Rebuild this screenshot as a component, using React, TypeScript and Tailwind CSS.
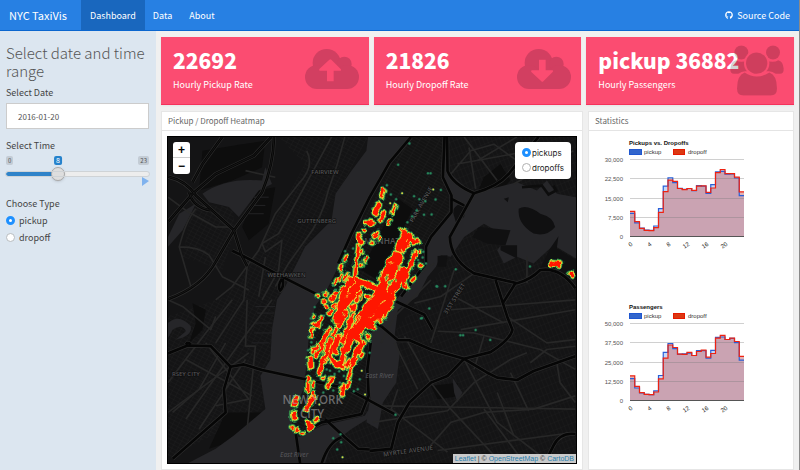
import React, { useState } from "react";
import { FaGithub } from "react-icons/fa";

const sourceFont = "font-['Noto_Sans_CJK_JP','Open_Sans',sans-serif]";

/* ---------- value boxes ---------- */

function CloudIcon({ down = false }: { down?: boolean }) {
  return (
    <svg viewBox="0 0 162 120" className="h-10 w-[54px]" aria-hidden="true">
      <g fill="#d23f61">
        <circle cx="65" cy="42" r="42" />
        <circle cx="118" cy="45" r="22" />
        <circle cx="36" cy="84" r="36" />
        <circle cx="126" cy="84" r="36" />
        <path d="M36 60H126V120H36Z" />
      </g>
      <path
        fill="#fb4c71"
        d={
          down
            ? "M66 32H86V64H107Q110 66 107 69L79 97Q76 100 73 97L43 69Q41 66 44 64H66Z"
            : "M66 97H86V65H107Q110 63 107 60L79 32Q76 29 73 32L43 60Q41 63 44 65H66Z"
        }
      />
    </svg>
  );
}

function PeopleIcon() {
  return (
    <svg viewBox="0 0 162 152" className="h-[51px] w-[54px]" aria-hidden="true">
      <mask id="people-gap">
        <rect width="162" height="152" fill="#fff" />
        <circle cx="80" cy="54" r="38" fill="#000" />
        <rect x="16" y="78" width="130" height="80" rx="30" fill="#000" />
      </mask>
      <mask id="body-gap">
        <rect width="162" height="152" fill="#fff" />
        <circle cx="80" cy="54" r="38" fill="#000" />
      </mask>
      <g fill="#000" opacity="0.17">
        <g mask="url(#people-gap)">
          <circle cx="34" cy="22" r="21" />
          <circle cx="129" cy="22" r="21" />
          <path d="M18 45Q34 54 52 45L60 86H12Q0 86 1 70Q3 48 18 45Z" />
          <path d="M145 45Q128 54 110 45L102 86H150Q162 86 161 70Q159 48 145 45Z" />
        </g>
        <circle cx="80" cy="54" r="32" />
        <path mask="url(#body-gap)" d="M44 82Q80 106 118 82Q141 90 141 130Q141 151 122 151H40Q21 151 21 130Q21 90 44 82Z" />
      </g>
    </svg>
  );
}

function ValueBox({ value, caption, icon, iconClass }: { value: string; caption: string; icon: React.ReactNode; iconClass: string }) {
  return (
    <section className="relative h-[68px] border-b border-[#f5315b] bg-[#fb4c71] pt-[7px] pl-3 text-white shadow-xs">
      <p className="text-[21px] leading-8 font-black">{value}</p>
      <p className="mt-px text-[9px] leading-4">{caption}</p>
      <div className={`absolute right-[10px] ${iconClass}`}>{icon}</div>
    </section>
  );
}

/* ---------- map ---------- */

const majorRoads = [
  "M6 275L80 190L150 130L265 75L318 18",
  "M80 155L110 100L170 18",
  "M6 138Q60 150 90 195L205 300L228 375L245 408",
  "M70 185Q80 230 135 240",
  "M326 18Q325 100 290 185L205 300L150 395Q110 470 6 508",
  "M200 362L228 375L350 440L465 498L510 520",
  "M350 446Q335 470 345 482Q358 470 352 446",
  "M6 672L65 648L135 650L195 712L175 780L180 850L100 920L20 990",
  "M60 645Q65 635 75 645",
  "M195 712L235 705L290 722L420 750L520 772",
  "M740 18L675 95L615 200L560 310L520 400",
  "M841 18L836 140L862 195L862 245L800 320L785 350L785 400L710 500",
  "M849 18L850 120Q865 160 930 188L857 320Q860 390 930 430L1060 460Q1100 450 1130 420Q1190 410 1236 475",
  "M862 205L900 225",
  "M930 188Q1000 170 1035 130L1090 60L1125 18",
  "M995 450L1030 560L1046 600Q1040 630 980 668L900 688L800 660L735 632L700 632L650 590",
  "M1055 460L1017 520",
  "M900 688L850 740L800 760L735 820L700 880L680 960L615 966",
  "M900 688L970 730L1000 745L1060 752L1110 725L1236 680",
  "M695 515L780 555L805 600",
  "M650 590L620 575",
  "M560 785L690 855",
  "M480 870L540 925L580 960L615 962",
  "M390 900L405 1004",
  "M1150 990L1170 950Q1190 910 1236 915",
  "M470 1004Q490 940 530 925",
  "M435 900L470 880L590 855L612 800L608 720L618 640",
];

const minorRoads = [
  "M425 60Q450 110 400 160L330 250L280 360L200 470L150 510",
  "M540 18Q520 100 490 180Q470 270 420 330L370 400L330 470",
  "M500 18L450 110L340 310L290 340L300 365L350 330L340 420L290 510",
  "M90 235Q60 270 40 350L60 420L75 470M40 350Q100 350 130 375L170 440L250 480",
  "M245 408L235 510L150 640M300 380L280 500",
  "M240 120L330 140M6 200L60 240L150 290L200 290",
  "M6 760L120 610L200 510M60 870L230 630L320 510M100 900L240 690",
  "M120 640L250 810L150 830M6 850L250 670M60 690L260 800",
  "M245 510L240 650L270 650L245 900",
  "M6 510L50 530L135 600L150 560M20 850L100 780L180 640",
  "M860 130L920 60L990 40L1060 90M880 100L1100 60M900 18L1000 150",
  "M915 50L935 175M940 90L1060 18M1050 160L1230 60",
  "M620 630L640 560L700 480L810 400M650 640L690 560L800 450",
  "M930 430L830 500L750 520M870 420L800 640M1090 380L1090 460",
  "M1030 560L1150 640L1236 630M820 605L930 610L1130 660L1236 720",
  "M720 620L800 760L860 840L1000 990M690 640L760 780",
  "M640 830L1236 840M625 880L850 845L930 760L1040 690L1090 670",
  "M790 960L860 880L960 850L1110 840L1236 800M820 965L1236 910",
  "M900 690L1000 880L1130 980M1040 730L1095 845M890 600L1236 540",
  "M1180 700L1190 760L1236 820M1100 700L1150 660L1236 650",
  "M960 620L930 720M960 840L1080 1000M1000 790L1050 920",
  "M860 540L1236 510M870 500L1020 580M700 780L680 840L850 970",
];

type Heat = [number, string];

const heatStrokes: Heat[] = [
  [8, "M312 30L306 50"], [15, "M296 74L287 96"], [9, "M313 98L304 118"], [13, "M262 126L276 129"],
  [4, "M348 75L338 97M334 118L328 130"], [7, "M296 158L284 170M301 172L298 176M252 150V151M278 188V189"],
  [13, "M236 168L244 186"], [8, "M236 200L229 252L226 290L212 318"], [6, "M262 230L256 242M245 255V256M244 214V215"],
  [7, "M187 256L182 272M200 230L195 240"], [5, "M170 300L164 312M186 286L178 300M204 282L196 296"],
  [12, "M371 152L402 184"], [32, "M382 170L366 200"], [36, "M352 234L324 284"], [30, "M318 290L306 334"],
  [11, "M413 184L405 190M408 220L392 258L372 304L378 322"], [7, "M424 255L422 257M422 212V213M404 296L398 302"],
  [24, "M370 275L346 318L322 370"], [24, "M236 312L214 346L184 386L172 420"], [13, "M232 302L260 312L306 334"],
  [16, "M212 300L194 336L178 380"], [36, "M306 344L268 388L246 426L224 468"], [28, "M326 370L298 400L262 432"],
  [11, "M264 350H268M224 378L214 384M242 340L230 362"], [12, "M198 398L180 436M218 404L204 450L186 486"],
  [9, "M236 460L240 496L226 528L214 560M250 488L238 520"], [18, "M214 460L202 500"], [16, "M196 500L186 550L172 556"],
  [10, "M166 480L150 528L156 546L188 562M178 470L164 520"], [10, "M138 458L124 510L108 528M116 582L132 540L150 484"],
  [8, "M150 448L136 474M170 446L158 468M262 466L266 476M272 440L284 448M210 540L200 560"],
  [11, "M102 436L116 430"], [7, "M96 452L94 470M102 408L100 412M124 416L118 440M112 498L98 516"], [14, "M91 538L92 560"],
  [8, "M128 596H130M156 598L142 622M190 622L186 646M214 570L206 600M206 612L202 624"],
  [8, "M84 610V638M102 640V646M86 598V600M100 610V618"], [14, "M50 656L42 676"], [12, "M98 658L78 692"],
  [14, "M42 704L44 718"], [8, "M37 745V746M50 752H51M64 763H65M106 724L112 718"], [14, "M84 732L88 748L94 742"],
  [9, "M113 349V350M152 356V358M141 378V380M150 398V399M136 343V344M134 366V367M168 340V341M160 356L164 350"],
  [7, "M190 322L182 332M164 374L160 384M248 524L244 530M230 540L222 548M320 392L316 410M300 420V426"],
  [14, "M820 250L842 253"], [15, "M878 282L882 285"],
];

const heatHoles = [
  "M316 292Q328 276 326 300Q318 310 316 292Z", "M346 296Q356 286 352 308Q344 312 346 296Z",
  "M238 350Q252 342 246 362Q236 368 238 350Z", "M212 390Q224 394 216 412Q208 410 212 390Z",
  "M284 346Q276 360 270 352", "M330 250L340 244M362 210L372 216M384 178L380 186", "M356 262Q364 250 360 276",
  "M200 352L208 340M188 402Q196 396 190 412", "M228 432L240 410M222 480Q232 474 226 492", "M302 372L318 362M268 412L280 404",
  "M340 340L352 328M198 470L208 462",
];

const sparks = [
  [322, 14], [368, 38, 1], [332, 68, 1], [350, 56], [334, 42], [462, 27, 1], [404, 47], [438, 62], [457, 102], [434, 103], [412, 90], [398, 108],
  [384, 126], [196, 213], [220, 205], [188, 240], [160, 316], [166, 330], [104, 382], [92, 416], [132, 408], [94, 488], [84, 512],
  [432, 215], [430, 232], [440, 250], [416, 240], [428, 415], [474, 320], [450, 386], [246, 574, 1], [256, 646, 1], [240, 600], [222, 636],
  [234, 630], [150, 574], [164, 584], [140, 570], [178, 576], [192, 590], [180, 610], [160, 634], [130, 640], [118, 676, 1], [240, 540], [270, 520],
  [348, 707], [182, 766], [184, 790], [160, 778], [188, 835, 1], [172, 812], [390, -112], [356, -48], [454, -22], [485, 28], [446, -22], [420, 56],
  [469, 57], [754, 259], [530, 268], [472, 319], [498, 319], [634, 481], [590, 451], [425, 416], [544, 467], [552, 467],
];

const mapLabels: [number, number, number, string, number?][] = [
  [480, 130, 18, "FAIRVIEW"], [455, 279, 18, "GUTTENBERG"], [364, 442, 18, "WEEHAWKEN"], [60, 739, 18, "RSEY CITY"],
  [678, 342, 25, "MANHATTAN"], [732, 973, 19, "MYRTLE AVENUE", -8], [776, 225, 18, "PARK AVENUE", -60], [876, 510, 18, "31ST STREET", -58],
];

const heatLayers = [
  { extra: 14, color: "#1c6b52", opacity: 0.5 },
  { extra: 10, color: "#43b04a", opacity: 0.9 },
  { extra: 5, color: "#f2e035", opacity: 1 },
  { extra: 0, color: "#ff1500", opacity: 1 },
];

function CityMap() {
  return (
    <svg viewBox="6 18 1232 985" preserveAspectRatio="xMidYMid slice" className="absolute inset-0 h-full w-full" role="img" aria-label="Heatmap of taxi pickups in New York City">
      <defs>
        <pattern id="grid-nj" width="16" height="11" patternUnits="userSpaceOnUse" patternTransform="rotate(28)">
          <path d="M0 0H16M0 0V11" stroke="#222" strokeWidth="1.5" fill="none" />
        </pattern>
        <pattern id="grid-ny" width="26" height="9" patternUnits="userSpaceOnUse" patternTransform="rotate(30)">
          <path d="M0 0H26M0 0V9" stroke="#272727" strokeWidth="1.5" fill="none" />
        </pattern>
        <pattern id="grid-queens" width="12" height="22" patternUnits="userSpaceOnUse" patternTransform="rotate(-22)">
          <path d="M0 0H12M0 0V22" stroke="#232323" strokeWidth="1.5" fill="none" />
        </pattern>
        <filter id="ragged" x="-5%" y="-20%" width="120%" height="140%">
          <feTurbulence type="fractalNoise" baseFrequency="0.06" numOctaves="1" seed="4" />
          <feDisplacementMap in="SourceGraphic" scale="20" xChannelSelector="R" yChannelSelector="G" />
        </filter>
      </defs>

      <rect x="6" y="18" width="1232" height="985" fill="#141415" />
      <path d="M340 18H610L500 220L400 400L330 520L320 690L290 840L6 990V560L180 500L290 340L420 100Z" fill="url(#grid-nj)" />
      <path d="M80 220L200 230L210 300L170 420L50 380Z" fill="url(#grid-nj)" />
      <path d="M700 18H1238V1003H480L620 700L860 380Z" fill="url(#grid-queens)" />
      <path d="M730 18H836V140L862 245L785 400L620 640L600 840L390 920L430 600L520 400Z" fill="#131313" />
      <path d="M730 18H836V140L862 245L785 400L620 640L600 840L390 920L430 600L520 400Z" fill="url(#grid-ny)" />

      <g fill="#0d0d0d">
        <path d="M110 60L230 40L300 30L290 110L200 150L100 180Z" />
        <path d="M270 180L330 170L310 280L250 330L230 290Z" />
        <path d="M80 520L120 540L110 600L70 640L90 580Z" />
        <path d="M700 205L745 235L640 450L590 420Z" />
        <path d="M800 770L880 760L890 800L820 810Z" />
        <path d="M180 850L300 850L220 930L130 960Z" />
        <path d="M960 140L1010 100L1040 150L960 230L935 200Z" />
      </g>

      <g fill="#262629">
        <path d="M735 18L675 95L615 190L590 270L550 330L515 420L485 480L450 530L432 610L425 700L415 780L385 850L378 900L400 925L470 890L600 860L620 830L640 850L560 900L500 945L480 1004H65L150 960L205 920L300 840L285 740L315 690L320 600L335 510L360 470L420 350L500 270L512 190L560 120L605 60L610 18Z" />
        <path d="M839 18H848L850 120L925 190L1000 170L1060 155L1120 180L1150 150L1180 190L1238 200V385L1170 345L1110 400L1060 380L1020 400L1000 360L1030 320L960 280L900 320L880 350L860 380L830 375L815 410L790 440L760 500L700 540L690 620L706 670L695 760L655 820L640 900L605 880L618 800L605 730L620 610L640 560L710 490L785 410L790 330L862 250V200L836 140Z" />
        <path d="M110 190Q180 140 290 150L300 110L320 160L280 180L220 260L190 230L130 215Z" />
        <path d="M6 320L40 250L90 220L50 300L6 350Z" />
        <path d="M6 580Q40 550 75 590Q80 620 30 630L60 605Q50 580 20 600L6 625Z" />
        <path d="M865 745L895 790L880 820L870 790Z" />
      </g>
      <g fill="#101011">
        <path d="M1065 235Q1090 220 1130 250Q1170 260 1175 290Q1150 320 1110 310Q1060 280 1065 235Z" />
        <path d="M1020 205L1035 200L1032 215Z" />
        <path d="M945 290L1040 300L1025 345L970 340L925 320Z" />
        <path d="M1060 345L1060 385L1010 360L1010 345Z" />
        <path d="M820 378L850 375L845 410L820 410Z" />
        <path d="M1160 355L1185 318L1180 355L1238 390V450L1130 415Z" />
        <path d="M865 240Q885 210 905 225L900 260L875 275Z" />
        <path d="M690 500L780 400L720 480L640 570Z" />
      </g>
      <g stroke="#232325" strokeWidth="3" fill="none">
        <path d="M270 530H330M275 550H325M270 580H322M265 610H320M260 640H310" />
        <path d="M265 200H310M260 225H300M250 250H295" />
      </g>
      <path d="M1075 170L1135 165L1155 192L1178 180L1170 165" fill="none" stroke="#0d0d0d" strokeWidth="8" />

      <g fill="none" strokeLinejoin="round">
        {minorRoads.map((d) => (
          <path key={d} d={d} stroke="#272727" strokeWidth="5" />
        ))}
        {majorRoads.map((d) => (
          <path key={d} d={d} stroke="#2d2d2d" strokeWidth="12" />
        ))}
        {majorRoads.map((d) => (
          <path key={d} d={d} stroke="#060606" strokeWidth="8" />
        ))}
        {majorRoads.slice(0, 5).map((d) => (
          <path key={d} d={d} stroke="#202020" strokeWidth="2" />
        ))}
      </g>

      <g fontFamily="'Open Sans', sans-serif" textAnchor="middle" fontWeight="600">
        {mapLabels.map(([x, y, size, text, angle]) => (
          <text key={text} x={x} y={y} fontSize={size} fill="#545456" stroke="#0c0c0c" strokeWidth="3" paintOrder="stroke" transform={`rotate(${angle ?? 0} ${x} ${y})`}>
            {text}
          </text>
        ))}
        <text x="645" y="746" fontSize="19" fontStyle="italic" fill="#505054">East River</text>
        <text x="387" y="986" fontSize="19" fontStyle="italic" fill="#505054">East River</text>
      </g>

      <g transform="translate(345 150)" filter="url(#ragged)" fill="none" strokeLinecap="round" strokeLinejoin="round">
        {heatLayers.map(({ extra, color, opacity }) => (
          <g key={color} stroke={color} opacity={opacity}>
            {heatStrokes.map(([w, d]) => (
              <path key={d} d={d} strokeWidth={w + extra} />
            ))}
          </g>
        ))}
        {heatHoles.map((d) => (
          <path key={d} d={d} stroke="#f2c035" strokeWidth="3" fill="#3c8a3a" />
        ))}
      </g>
      <g transform="translate(345 150)">
        {sparks.map(([x, y, hot], i) => (
          <g key={i}>
            <circle cx={x} cy={y} r="5" fill="#1e6f5c" opacity="0.5" />
            <circle cx={x} cy={y} r="3" fill={hot ? "#d8d940" : "#2a8a58"} />
          </g>
        ))}
      </g>

      <g fontFamily="'Open Sans', sans-serif" textAnchor="middle" fontSize="35" fontWeight="600" fill="#a3a3a3" fillOpacity="0.6">
        <text x="443" y="825">NEW YORK</text>
        <text x="441" y="868">CITY</text>
      </g>
    </svg>
  );
}

function MapRadio({ label, checked, onSelect }: { label: string; checked: boolean; onSelect: () => void }) {
  return (
    <label className="flex h-[15px] items-center gap-px">
      <input type="radio" name="layer" checked={checked} onChange={onSelect} className="size-[9px] appearance-none rounded-full border border-[#b0b0b0] bg-white checked:border-3 checked:border-[#1e90ff]" />
      {label}
    </label>
  );
}

function HeatmapPanel() {
  const [layer, setLayer] = useState("pickups");
  return (
    <Panel title="Pickup / Dropoff Heatmap">
      <div className="relative m-[5px] min-h-[240px] flex-1 overflow-hidden border border-black bg-[#141415]">
        <CityMap />
        <div className="absolute top-[5px] left-[5px] w-[17px] divide-y divide-[#ccc] overflow-hidden rounded-[3px] bg-white font-['Liberation_Sans',sans-serif] text-xs font-bold text-black">
          <button type="button" aria-label="Zoom in" className="block h-4 w-full leading-4">+</button>
          <button type="button" aria-label="Zoom out" className="block h-4 w-full leading-4">−</button>
        </div>
        <fieldset className="absolute top-[5px] right-[5px] w-[56px] rounded-[4px] bg-white pt-[3px] pb-1 pl-[7px] font-['Inter',sans-serif] text-[8px] text-[#222]">
          <MapRadio label="pickups" checked={layer === "pickups"} onSelect={() => setLayer("pickups")} />
          <MapRadio label="dropoffs" checked={layer === "dropoffs"} onSelect={() => setLayer("dropoffs")} />
        </fieldset>
        <p className="absolute right-0 bottom-0 bg-[#c9c9c9] px-0.5 font-['Liberation_Sans',sans-serif] text-[7px] leading-[9px] whitespace-nowrap text-[#333]">
          <a href="#leaflet" className="text-[#2a7fae]">Leaflet</a> | © <a href="#osm" className="text-[#2a7fae]">OpenStreetMap</a> © <a href="#cartodb" className="text-[#2a7fae]">CartoDB</a>
        </p>
      </div>
    </Panel>
  );
}

/* ---------- charts ---------- */

const hourly = {
  pickup: [8800, 5100, 3100, 2300, 2200, 3900, 10700, 19400, 22700, 20800, 18600, 18200, 18500, 17700, 19600, 19400, 16600, 20000, 25000, 25200, 24100, 24200, 22600, 15700],
  dropoff: [9600, 5600, 3000, 2200, 2100, 3300, 9200, 17300, 21800, 21300, 18500, 18100, 18500, 17800, 19400, 19500, 17000, 18700, 24700, 25900, 24300, 24300, 22900, 17200],
};
const passengers = {
  pickup: [13900, 7800, 4600, 3700, 3500, 5900, 15900, 30900, 36700, 33300, 29800, 30000, 30400, 28900, 32000, 32000, 27200, 32200, 40700, 40900, 39300, 40000, 37200, 25900],
  dropoff: [15700, 8900, 4800, 3700, 3500, 5200, 13700, 27200, 35700, 34100, 29800, 29600, 30900, 28900, 31500, 32400, 27800, 30200, 40200, 42000, 39300, 40200, 38000, 28300],
};

const PLOT = { left: 36, top: 23, width: 114, height: 77 };

function stepPath(values: number[], max: number) {
  const step = PLOT.width / values.length;
  return values
    .map((v, i) => {
      const y = PLOT.top + PLOT.height * (1 - v / max);
      const start = i ? `V${y}` : `M${PLOT.left} ${y}`;
      return `${start}H${PLOT.left + (i + 1) * step}`;
    })
    .join("");
}

function StepChart({ title, data, max }: { title: string; data: { pickup: number[]; dropoff: number[] }; max: number }) {
  const bottom = PLOT.top + PLOT.height;
  const close = `V${bottom}H${PLOT.left}Z`;
  const pickup = stepPath(data.pickup, max);
  const dropoff = stepPath(data.dropoff, max);
  return (
    <svg viewBox="0 0 160 120" className="block h-[120px] w-40 font-['Liberation_Sans',Arial,sans-serif]" fontSize="6" role="img" aria-label={title}>
      <text x="35" y="9" fontWeight="bold" fill="#111">{title}</text>
      <rect x="35.5" y="13.5" width="12" height="5" fill="#3366cc" stroke="#1f57d0" />
      <text x="50" y="18" fill="#333">pickup</text>
      <rect x="79.5" y="13.5" width="11" height="5" fill="#dc3912" stroke="#e61a00" />
      <text x="94" y="18" fill="#333">dropoff</text>
      <path d={pickup + close} fill="#9cc0f5" fillOpacity="0.6" />
      <path d={dropoff + close} fill="#ce7f82" fillOpacity="0.6" />
      {[0, 1, 2, 3, 4].map((i) => {
        const y = Math.round(PLOT.top + (PLOT.height * i) / 4);
        return (
          <g key={i}>
            <path d={`M${PLOT.left} ${y + 0.5}h${PLOT.width}`} stroke={i === 4 ? "#555" : "#777"} strokeOpacity={i === 4 ? 1 : 0.35} />
            <text x="29" y={y + 3} textAnchor="end" fill="#555">{((max * (4 - i)) / 4).toLocaleString("en-US")}</text>
          </g>
        );
      })}
      <path d={pickup} fill="none" stroke="#2a5fd8" strokeWidth="1.2" />
      <path d={dropoff} fill="none" stroke="#ee2211" strokeWidth="1.2" />
      {[0, 4, 8, 12, 16, 20].map((h) => {
        const x = PLOT.left + 3 + (h * PLOT.width) / 24;
        return (
          <text key={h} x={x} y="109" textAnchor="end" fill="#222" transform={`rotate(-35 ${x} 109)`}>{h}</text>
        );
      })}
    </svg>
  );
}

/* ---------- layout ---------- */

function Panel({ title, children }: { title: string; children: React.ReactNode }) {
  return (
    <section className="flex flex-col border border-[#e6e6e6] bg-white">
      <h2 className="border-b border-[#e4e4e4] px-1.5 text-[8px] leading-[18px] text-[#666]">{title}</h2>
      {children}
    </section>
  );
}

function TimeSlider() {
  const [hour, setHour] = useState(8);
  const pct = (hour / 23) * 100;
  return (
    <div className="mt-[9px]">
      <label htmlFor="hour" className="block text-[9px] leading-4 text-[#444]">Select Time</label>
      <div className="relative mt-0.5 flex h-[9px] justify-between text-[6px] leading-[9px] text-[#555]">
        <span className="rounded-[2px] bg-[#c3ccd5] px-[2px]">0</span>
        <output htmlFor="hour" className="absolute top-0 -translate-x-1/2 rounded-[2px] bg-[#2582cc] px-[2px] text-[7px] text-white" style={{ left: `calc(7px + (100% - 14px) * ${pct / 100})` }}>{hour}</output>
        <span className="rounded-[2px] bg-[#c3ccd5] px-[2px]">23</span>
      </div>
      <input
        id="hour"
        type="range"
        min={0}
        max={23}
        value={hour}
        onChange={(e) => setHour(Number(e.target.value))}
        className="mt-[7px] block h-1 w-full appearance-none rounded-full outline outline-[#cfd3d6] [&::-webkit-slider-thumb]:size-[14px] [&::-webkit-slider-thumb]:appearance-none [&::-webkit-slider-thumb]:rounded-full [&::-webkit-slider-thumb]:border [&::-webkit-slider-thumb]:border-[#aaa] [&::-webkit-slider-thumb]:bg-[#dedede] [&::-webkit-slider-thumb]:shadow-sm"
        style={{ background: `linear-gradient(to right, #2f83c9 ${pct}%, #ededed ${pct}%)` }}
      />
      <button type="button" aria-label="Play" className="mt-px ml-auto block">
        <svg viewBox="0 0 8 9" className="h-[9px] w-2" aria-hidden="true">
          <path d="M1 0L8 4L1 9Z" fill="#7fb2ee" />
        </svg>
      </button>
    </div>
  );
}

function TypeRadio({ label, checked, onSelect }: { label: string; checked: boolean; onSelect: () => void }) {
  return (
    <label className="flex h-[17px] items-center gap-1 text-[9px] leading-4 text-[#444]">
      <input type="radio" name="type" checked={checked} onChange={onSelect} className="size-[9px] appearance-none rounded-full border border-[#b8bcc0] bg-white checked:border-3 checked:border-[#1e90ff]" />
      {label}
    </label>
  );
}

function Sidebar() {
  const [type, setType] = useState("pickup");
  return (
    <aside className="w-[156px] shrink-0 bg-[#dce6f0] px-1.5 pt-[13px] pr-[7px]">
      <h1 className="text-[15px] leading-[18px] font-light text-[#555]">Select date and time range</h1>
      <label htmlFor="date" className="mt-[5px] block text-[9px] leading-4 text-[#444]">Select Date</label>
      <input id="date" type="text" defaultValue="2016-01-20" className="mt-[2px] block h-[26px] w-full border border-[#ccc] bg-white px-[11px] text-[8px] text-[#555]" />
      <TimeSlider />
      <fieldset className="mt-[10px]">
        <legend className="text-[9px] leading-4 text-[#444]">Choose Type</legend>
        <TypeRadio label="pickup" checked={type === "pickup"} onSelect={() => setType("pickup")} />
        <TypeRadio label="dropoff" checked={type === "dropoff"} onSelect={() => setType("dropoff")} />
      </fieldset>
    </aside>
  );
}

export default function App() {
  return (
    <div className={`flex min-h-screen flex-col border-r border-[#8a8a8a] bg-[#f0f0f0] ${sourceFont}`}>
      <nav className="flex h-[31px] items-stretch border-b border-[#0b66cf] bg-[#2780e3] text-[9px] leading-[31px] text-white">
        <a href="#home" className="w-[81px] pl-[9px] text-[11px]">NYC TaxiVis</a>
        <a href="#dashboard" aria-current="page" className="bg-[#1967be] px-[9px]">Dashboard</a>
        <a href="#data" className="px-2">Data</a>
        <a href="#about" className="px-[9px]">About</a>
        <a href="#source" className="ml-auto flex items-center gap-1 pr-[9px]">
          <FaGithub className="size-2" />
          Source Code
        </a>
      </nav>
      <div className="flex flex-1">
        <Sidebar />
        <main className="flex min-w-0 flex-1 flex-col gap-1.5 px-[5px] pt-1.5">
          <div className="grid grid-cols-3 gap-[5px]">
            <ValueBox value="22692" caption="Hourly Pickup Rate" icon={<CloudIcon />} iconClass="top-3" />
            <ValueBox value="21826" caption="Hourly Dropoff Rate" icon={<CloudIcon down />} iconClass="top-3" />
            <ValueBox value="pickup 36882" caption="Hourly Passengers" icon={<PeopleIcon />} iconClass="top-2" />
          </div>
          <div className="grid flex-1 grid-cols-[422fr_206fr] gap-[5px]">
            <HeatmapPanel />
            <Panel title="Statistics">
              <div className="flex flex-col gap-11 pt-[5px] pl-[5px]">
                <StepChart title="Pickups vs. Dropoffs" data={hourly} max={30000} />
                <StepChart title="Passengers" data={passengers} max={50000} />
              </div>
            </Panel>
          </div>
        </main>
      </div>
    </div>
  );
}
